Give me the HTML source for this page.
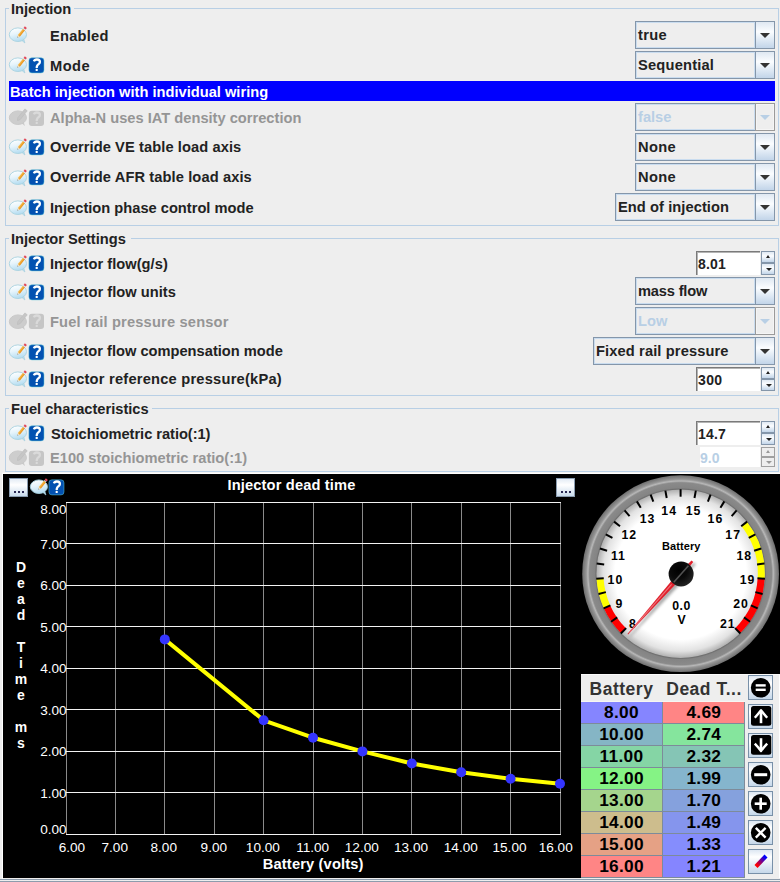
<!DOCTYPE html><html><head><meta charset="utf-8"><style>
*{margin:0;padding:0;box-sizing:border-box}
html,body{width:780px;height:882px;overflow:hidden;background:#eeeeee}
body{position:relative;font-family:"Liberation Sans",sans-serif;font-weight:bold}
.t{position:absolute;white-space:nowrap}
.a{position:absolute}
.grp{position:absolute;border:1px solid #b8cfe5}
.cb{position:absolute;border:1px solid #8496aa;background:#eeeeee}
.cb .in{position:absolute;left:0;top:0;bottom:0;border:1px solid #c9dcef}
.cb .ar{position:absolute;right:0;top:0;bottom:0;width:19px;border-left:1px solid #8496aa;background:linear-gradient(#dfe8f2,#fbfdff 38%,#c2d5e9)}
.cb .tri{position:absolute;left:3.5px;top:11px;width:0;height:0;border-left:5px solid transparent;border-right:5px solid transparent;border-top:5px solid #333}
.cb.dis .ar{top:-1px;bottom:-1px;right:-1px;width:20px;border:1px solid #9a9a9a;background:#eeeeee;box-shadow:inset 1px 1px 0 #f5f5f5,inset -1px -1px 0 #f5f5f5}
.cb.dis .ar .tri{left:3.5px;top:11px}
.cb.dis .tri{border-top-color:#b8cfe5}
.sp{position:absolute;background:#fff;border-top:1px solid #7a7a7a;border-left:1px solid #7a7a7a;box-shadow:inset 1px 1px 0 #b4b4b4}
.sb{position:absolute;border:1px solid #8496aa;background:linear-gradient(#dfe8f2,#fbfdff 40%,#c2d5e9)}
.sb.dis{border-color:#a0a0a0;background:#eeeeee}
.up{position:absolute;left:4px;width:0;height:0;border-left:2.5px solid transparent;border-right:2.5px solid transparent;border-bottom:3px solid #222}
.dn{position:absolute;left:3.5px;width:0;height:0;border-left:3px solid transparent;border-right:3px solid transparent;border-top:3.5px solid #222}
</style></head><body>

<svg width="0" height="0" style="position:absolute">
<defs>
<linearGradient id="bub" x1="0.2" y1="0" x2="0.5" y2="1"><stop offset="0" stop-color="#ffffff"/><stop offset="0.45" stop-color="#e6f4fb"/><stop offset="1" stop-color="#b3dcf1"/></linearGradient>
<linearGradient id="pen" x1="0" y1="0" x2="0" y2="1"><stop offset="0" stop-color="#f8c25a"/><stop offset="1" stop-color="#e88d12"/></linearGradient>
<symbol id="ed" viewBox="0 0 22 22">
<path d="M14.6 17.2 L17.9 20 L16.9 16.4 Z" fill="#b9dff2" stroke="#a6d0de" stroke-width="0.7"/>
<ellipse cx="10.9" cy="11.7" rx="8.6" ry="6.8" fill="url(#bub)" stroke="#a8d2e0" stroke-width="0.9"/>
<g transform="translate(10.4,14.6) rotate(-51.1)">
<path d="M0 0 L2.2 -1.3 L2.2 1.3 Z" fill="#f3e2c0"/>
<path d="M0 0 L0.9 -0.55 L0.9 0.55 Z" fill="#444"/>
<rect x="2.2" y="-1.3" width="8.2" height="2.6" fill="url(#pen)"/>
<rect x="10.4" y="-1.3" width="1" height="2.6" fill="#d3e6f0"/>
<rect x="11.4" y="-1.3" width="2.1" height="2.6" fill="#e0485a"/>
</g>
</symbol>
<symbol id="edd" viewBox="0 0 22 22">
<path d="M14.6 17.2 L17.9 20 L16.9 16.4 Z" fill="#cbcbcb"/>
<ellipse cx="10.9" cy="11.7" rx="8.6" ry="6.8" fill="#cdcdcd" stroke="#c6c6c6" stroke-width="0.9"/>
<g transform="translate(10.4,14.6) rotate(-51.1)">
<path d="M0 0 L2.4 -1.5 L13.8 -1.5 L13.8 1.5 L2.4 1.5 Z" fill="#c6c6c6" stroke="#bdbdbd" stroke-width="0.6"/>
</g>
</symbol>
<symbol id="hq" viewBox="0 0 20 20">
<rect x="1.9" y="2.8" width="15.1" height="15.1" rx="3" fill="#0351b1" stroke="#5fc9d8" stroke-width="0.5"/>
<path d="M6.9 6.4 C7.4 5 8.6 4.5 9.9 4.5 C11.7 4.5 12.9 5.6 12.9 7.1 C12.9 8.7 11.3 9.3 10.5 10.2 C10 10.8 9.7 11.5 9.7 12.9" fill="none" stroke="#fff" stroke-width="2.3"/>
<circle cx="9.7" cy="14.9" r="1.2" fill="#fff"/>
</symbol>
<symbol id="hqd" viewBox="0 0 20 20">
<rect x="1.9" y="2.8" width="15.1" height="15.1" rx="3" fill="#c6c6c6"/>
<path d="M6.9 6.4 C7.4 5 8.6 4.5 9.9 4.5 C11.7 4.5 12.9 5.6 12.9 7.1 C12.9 8.7 11.3 9.3 10.5 10.2 C10 10.8 9.7 11.5 9.7 12.9" fill="none" stroke="#dadada" stroke-width="2.3"/>
<circle cx="9.7" cy="14.9" r="1.2" fill="#dadada"/>
</symbol>
</defs></svg>
<div class="grp" style="left:5px;top:8px;width:774px;height:218px"></div><div class="a" style="left:9px;top:6px;width:65px;height:5px;background:#eee"></div><div class="t" style="left:11px;top:1.58px;font-size:14.67px;line-height:14.67px;color:#222;">Injection</div>
<svg class="a" style="left:7px;top:23.2px" width="22" height="22"><use href="#ed"/></svg>
<div class="t" style="left:50px;top:28.58px;font-size:14.67px;line-height:14.67px;color:#222;letter-spacing:0.23px;">Enabled</div>
<div class="cb" style="left:635px;top:21px;width:140px;height:28px"><div class="in" style="width:119px"></div><div class="ar"><div class="tri"></div></div></div>
<div class="t" style="left:638px;top:27.58px;font-size:14.67px;line-height:14.67px;color:#222;letter-spacing:0.3px;">true</div>
<svg class="a" style="left:7px;top:53.0px" width="22" height="22"><use href="#ed"/></svg><svg class="a" style="left:27px;top:54.7px" width="20" height="20"><use href="#hq"/></svg>
<div class="t" style="left:50px;top:58.58px;font-size:14.67px;line-height:14.67px;color:#222;letter-spacing:0.45px;">Mode</div>
<div class="cb" style="left:635px;top:51px;width:140px;height:28px"><div class="in" style="width:119px"></div><div class="ar"><div class="tri"></div></div></div>
<div class="t" style="left:638px;top:57.58px;font-size:14.67px;line-height:14.67px;color:#222;letter-spacing:0.2px;">Sequential</div>
<div class="a" style="left:9px;top:81px;width:766px;height:20px;background:#0000ff"></div>
<div class="t" style="left:10px;top:84.58px;font-size:14.67px;line-height:14.67px;color:#fff;">Batch injection with individual wiring</div>
<svg class="a" style="left:7px;top:105.8px" width="22" height="22"><use href="#edd"/></svg><svg class="a" style="left:27px;top:107.5px" width="20" height="20"><use href="#hqd"/></svg>
<div class="t" style="left:50px;top:110.58px;font-size:14.67px;line-height:14.67px;color:#959595;">Alpha-N uses IAT density correction</div>
<div class="cb dis" style="left:635px;top:103px;width:140px;height:28px"><div class="in" style="width:119px"></div><div class="ar"><div class="tri"></div></div></div>
<div class="t" style="left:638px;top:109.58px;font-size:14.67px;line-height:14.67px;color:#b8cfe5;">false</div>
<svg class="a" style="left:7px;top:135.2px" width="22" height="22"><use href="#ed"/></svg><svg class="a" style="left:27px;top:136.9px" width="20" height="20"><use href="#hq"/></svg>
<div class="t" style="left:50px;top:139.58px;font-size:14.67px;line-height:14.67px;color:#222;letter-spacing:0.085px;">Override VE table load axis</div>
<div class="cb" style="left:635px;top:133px;width:140px;height:28px"><div class="in" style="width:119px"></div><div class="ar"><div class="tri"></div></div></div>
<div class="t" style="left:638px;top:139.58px;font-size:14.67px;line-height:14.67px;color:#222;letter-spacing:0.37px;">None</div>
<svg class="a" style="left:7px;top:165.5px" width="22" height="22"><use href="#ed"/></svg><svg class="a" style="left:27px;top:167.2px" width="20" height="20"><use href="#hq"/></svg>
<div class="t" style="left:50px;top:169.58px;font-size:14.67px;line-height:14.67px;color:#222;letter-spacing:0.1px;">Override AFR table load axis</div>
<div class="cb" style="left:635px;top:163px;width:140px;height:28px"><div class="in" style="width:119px"></div><div class="ar"><div class="tri"></div></div></div>
<div class="t" style="left:638px;top:169.58px;font-size:14.67px;line-height:14.67px;color:#222;letter-spacing:0.37px;">None</div>
<svg class="a" style="left:7px;top:195.7px" width="22" height="22"><use href="#ed"/></svg><svg class="a" style="left:27px;top:197.4px" width="20" height="20"><use href="#hq"/></svg>
<div class="t" style="left:50px;top:200.58px;font-size:14.67px;line-height:14.67px;color:#222;">Injection phase control mode</div>
<div class="cb" style="left:615px;top:193px;width:160px;height:28px"><div class="in" style="width:139px"></div><div class="ar"><div class="tri"></div></div></div>
<div class="t" style="left:618px;top:199.58px;font-size:14.67px;line-height:14.67px;color:#222;letter-spacing:0.07px;">End of injection</div>
<div class="grp" style="left:5px;top:238px;width:774px;height:158px"></div><div class="a" style="left:9px;top:236px;width:122px;height:5px;background:#eee"></div><div class="t" style="left:11px;top:231.58px;font-size:14.67px;line-height:14.67px;color:#222;">Injector Settings</div>
<svg class="a" style="left:7px;top:251.5px" width="22" height="22"><use href="#ed"/></svg><svg class="a" style="left:27px;top:253.2px" width="20" height="20"><use href="#hq"/></svg>
<div class="t" style="left:50px;top:256.58px;font-size:14.67px;line-height:14.67px;color:#222;letter-spacing:0.03px;">Injector flow(g/s)</div>
<div class="sp" style="left:696px;top:251px;width:64px;height:24px"></div><div class="t" style="left:698px;top:256.65px;font-size:14px;line-height:14px;color:#222;letter-spacing:0.2px;">8.01</div>
<div class="sb" style="left:761px;top:251px;width:14px;height:12px"><div class="up" style="top:3px"></div></div><div class="sb" style="left:761px;top:263px;width:14px;height:12px"><div class="dn" style="top:4px"></div></div>
<svg class="a" style="left:7px;top:279.9px" width="22" height="22"><use href="#ed"/></svg><svg class="a" style="left:27px;top:281.6px" width="20" height="20"><use href="#hq"/></svg>
<div class="t" style="left:50px;top:284.58px;font-size:14.67px;line-height:14.67px;color:#222;letter-spacing:0.03px;">Injector flow units</div>
<div class="cb" style="left:635px;top:277px;width:140px;height:28px"><div class="in" style="width:119px"></div><div class="ar"><div class="tri"></div></div></div>
<div class="t" style="left:638px;top:283.58px;font-size:14.67px;line-height:14.67px;color:#222;letter-spacing:-0.18px;">mass flow</div>
<svg class="a" style="left:7px;top:309.7px" width="22" height="22"><use href="#edd"/></svg><svg class="a" style="left:27px;top:311.4px" width="20" height="20"><use href="#hqd"/></svg>
<div class="t" style="left:50px;top:314.58px;font-size:14.67px;line-height:14.67px;color:#959595;letter-spacing:0.17px;">Fuel rail pressure sensor</div>
<div class="cb dis" style="left:635px;top:307px;width:140px;height:28px"><div class="in" style="width:119px"></div><div class="ar"><div class="tri"></div></div></div>
<div class="t" style="left:638px;top:313.58px;font-size:14.67px;line-height:14.67px;color:#b8cfe5;">Low</div>
<svg class="a" style="left:7px;top:339.9px" width="22" height="22"><use href="#ed"/></svg><svg class="a" style="left:27px;top:341.6px" width="20" height="20"><use href="#hq"/></svg>
<div class="t" style="left:50px;top:343.58px;font-size:14.67px;line-height:14.67px;color:#222;">Injector flow compensation mode</div>
<div class="cb" style="left:593px;top:337px;width:182px;height:28px"><div class="in" style="width:161px"></div><div class="ar"><div class="tri"></div></div></div>
<div class="t" style="left:596px;top:343.58px;font-size:14.67px;line-height:14.67px;color:#222;letter-spacing:0.12px;">Fixed rail pressure</div>
<svg class="a" style="left:7px;top:367.2px" width="22" height="22"><use href="#ed"/></svg><svg class="a" style="left:27px;top:368.9px" width="20" height="20"><use href="#hq"/></svg>
<div class="t" style="left:50px;top:371.58px;font-size:14.67px;line-height:14.67px;color:#222;letter-spacing:0.22px;">Injector reference pressure(kPa)</div>
<div class="sp" style="left:696px;top:367px;width:64px;height:24px"></div><div class="t" style="left:698px;top:372.65px;font-size:14px;line-height:14px;color:#222;letter-spacing:0.4px;">300</div>
<div class="sb" style="left:761px;top:367px;width:14px;height:12px"><div class="up" style="top:3px"></div></div><div class="sb" style="left:761px;top:379px;width:14px;height:12px"><div class="dn" style="top:4px"></div></div>
<div class="grp" style="left:5px;top:408px;width:774px;height:64px"></div><div class="a" style="left:9px;top:406px;width:143px;height:5px;background:#eee"></div><div class="t" style="left:11px;top:401.58px;font-size:14.67px;line-height:14.67px;color:#222;">Fuel characteristics</div>
<svg class="a" style="left:7px;top:421.3px" width="22" height="22"><use href="#ed"/></svg><svg class="a" style="left:27px;top:423.0px" width="20" height="20"><use href="#hq"/></svg>
<div class="t" style="left:51px;top:426.58px;font-size:14.67px;line-height:14.67px;color:#222;letter-spacing:-0.04px;">Stoichiometric ratio(:1)</div>
<div class="sp" style="left:696px;top:421px;width:64px;height:24px"></div><div class="t" style="left:698px;top:426.65px;font-size:14px;line-height:14px;color:#222;letter-spacing:0.2px;">14.7</div>
<div class="sb" style="left:761px;top:421px;width:14px;height:12px"><div class="up" style="top:3px"></div></div><div class="sb" style="left:761px;top:433px;width:14px;height:12px"><div class="dn" style="top:4px"></div></div>
<svg class="a" style="left:7px;top:445.9px" width="22" height="22"><use href="#edd"/></svg><svg class="a" style="left:27px;top:447.6px" width="20" height="20"><use href="#hqd"/></svg>
<div class="t" style="left:50px;top:450.58px;font-size:14.67px;line-height:14.67px;color:#959595;">E100 stoichiometric ratio(:1)</div>
<div class="a" style="left:700px;top:447px;width:60px;height:20px;background:#fff"></div><div class="t" style="left:700px;top:450.65px;font-size:14px;line-height:14px;color:#b8cfe5;">9.0</div>
<div class="sb dis" style="left:761px;top:447px;width:14px;height:10px"><div class="up" style="top:2px;border-bottom-color:#999"></div></div><div class="sb dis" style="left:761px;top:457px;width:14px;height:10px"><div class="dn" style="top:3px;border-top-color:#999"></div></div>
<div class="a" style="left:2px;top:472px;width:778px;height:1px;background:#f3f3f3"></div><div class="a" style="left:2px;top:473px;width:778px;height:1px;background:#fff"></div><div class="a" style="left:2px;top:473px;width:1px;height:406px;background:#fff"></div>
<div class="a" style="left:3px;top:474px;width:777px;height:404px;background:#000"></div>
<div class="a" style="left:0;top:879px;width:780px;height:1px;background:#8d9cac"></div>
<div class="a" style="left:0;top:881px;width:780px;height:1px;background:#8d9cac"></div>
<svg class="a" style="left:0;top:0" width="780" height="882" viewBox="0 0 780 882" font-family="&quot;Liberation Sans&quot;, sans-serif" font-weight="normal">
<line x1="66.5" y1="502" x2="66.5" y2="835" stroke="#8a8a8a" stroke-width="1"/>
<line x1="115.5" y1="502" x2="115.5" y2="835" stroke="#8a8a8a" stroke-width="1"/>
<line x1="164.5" y1="502" x2="164.5" y2="835" stroke="#8a8a8a" stroke-width="1"/>
<line x1="214.5" y1="502" x2="214.5" y2="835" stroke="#8a8a8a" stroke-width="1"/>
<line x1="263.5" y1="502" x2="263.5" y2="835" stroke="#8a8a8a" stroke-width="1"/>
<line x1="313.5" y1="502" x2="313.5" y2="835" stroke="#8a8a8a" stroke-width="1"/>
<line x1="362.5" y1="502" x2="362.5" y2="835" stroke="#8a8a8a" stroke-width="1"/>
<line x1="411.5" y1="502" x2="411.5" y2="835" stroke="#8a8a8a" stroke-width="1"/>
<line x1="461.5" y1="502" x2="461.5" y2="835" stroke="#8a8a8a" stroke-width="1"/>
<line x1="510.5" y1="502" x2="510.5" y2="835" stroke="#8a8a8a" stroke-width="1"/>
<line x1="560.5" y1="502" x2="560.5" y2="835" stroke="#8a8a8a" stroke-width="1"/>
<line x1="66" y1="834.5" x2="561" y2="834.5" stroke="#f2f2f2" stroke-width="1"/>
<line x1="66" y1="792.5" x2="561" y2="792.5" stroke="#f2f2f2" stroke-width="1"/>
<line x1="66" y1="751.5" x2="561" y2="751.5" stroke="#f2f2f2" stroke-width="1"/>
<line x1="66" y1="709.5" x2="561" y2="709.5" stroke="#f2f2f2" stroke-width="1"/>
<line x1="66" y1="668.5" x2="561" y2="668.5" stroke="#f2f2f2" stroke-width="1"/>
<line x1="66" y1="626.5" x2="561" y2="626.5" stroke="#f2f2f2" stroke-width="1"/>
<line x1="66" y1="585.5" x2="561" y2="585.5" stroke="#f2f2f2" stroke-width="1"/>
<line x1="66" y1="543.5" x2="561" y2="543.5" stroke="#f2f2f2" stroke-width="1"/>
<line x1="66" y1="502.5" x2="561" y2="502.5" stroke="#f2f2f2" stroke-width="1"/>
<text x="66.7" y="833.8" fill="#fff" font-size="13.6" text-anchor="end">0.00</text>
<text x="66.7" y="797.7" fill="#fff" font-size="13.6" text-anchor="end">1.00</text>
<text x="66.7" y="756.2" fill="#fff" font-size="13.6" text-anchor="end">2.00</text>
<text x="66.7" y="714.7" fill="#fff" font-size="13.6" text-anchor="end">3.00</text>
<text x="66.7" y="673.2" fill="#fff" font-size="13.6" text-anchor="end">4.00</text>
<text x="66.7" y="631.7" fill="#fff" font-size="13.6" text-anchor="end">5.00</text>
<text x="66.7" y="590.2" fill="#fff" font-size="13.6" text-anchor="end">6.00</text>
<text x="66.7" y="548.7" fill="#fff" font-size="13.6" text-anchor="end">7.00</text>
<text x="66.7" y="513.8" fill="#fff" font-size="13.6" text-anchor="end">8.00</text>
<text x="71.9" y="852" fill="#fff" font-size="13.6" text-anchor="middle">6.00</text>
<text x="114.75" y="852" fill="#fff" font-size="13.6" text-anchor="middle">7.00</text>
<text x="163.75" y="852" fill="#fff" font-size="13.6" text-anchor="middle">8.00</text>
<text x="213.85" y="852" fill="#fff" font-size="13.6" text-anchor="middle">9.00</text>
<text x="262.85" y="852" fill="#fff" font-size="13.6" text-anchor="middle">10.00</text>
<text x="312.65" y="852" fill="#fff" font-size="13.6" text-anchor="middle">11.00</text>
<text x="361.8" y="852" fill="#fff" font-size="13.6" text-anchor="middle">12.00</text>
<text x="411" y="852" fill="#fff" font-size="13.6" text-anchor="middle">13.00</text>
<text x="460.8" y="852" fill="#fff" font-size="13.6" text-anchor="middle">14.00</text>
<text x="509.5" y="852" fill="#fff" font-size="13.6" text-anchor="middle">15.00</text>
<text x="555.7" y="852" fill="#fff" font-size="13.6" text-anchor="middle">16.00</text>
<text x="313.2" y="868.7" fill="#fff" font-size="14.67" font-weight="bold" text-anchor="middle" letter-spacing="0.15">Battery (volts)</text>
<text x="291.5" y="489.8" fill="#fff" font-size="14.67" font-weight="bold" text-anchor="middle" letter-spacing="0.15">Injector dead time</text>
<text x="21" y="572.3" fill="#fff" font-size="14" font-weight="bold" text-anchor="middle">D</text>
<text x="21" y="588.3" fill="#fff" font-size="14" font-weight="bold" text-anchor="middle">e</text>
<text x="21" y="604.3" fill="#fff" font-size="14" font-weight="bold" text-anchor="middle">a</text>
<text x="21" y="620.3" fill="#fff" font-size="14" font-weight="bold" text-anchor="middle">d</text>
<text x="21" y="652.3" fill="#fff" font-size="14" font-weight="bold" text-anchor="middle">T</text>
<text x="21" y="668.3" fill="#fff" font-size="14" font-weight="bold" text-anchor="middle">i</text>
<text x="21" y="684.3" fill="#fff" font-size="14" font-weight="bold" text-anchor="middle">m</text>
<text x="21" y="700.3" fill="#fff" font-size="14" font-weight="bold" text-anchor="middle">e</text>
<text x="21" y="732.3" fill="#fff" font-size="14" font-weight="bold" text-anchor="middle">m</text>
<text x="21" y="748.3" fill="#fff" font-size="14" font-weight="bold" text-anchor="middle">s</text>
<polyline points="164.8,639.4 263.6,720.3 313.0,737.7 362.4,751.4 411.8,763.5 461.2,772.2 510.6,778.8 560.0,783.8" fill="none" stroke="#ffff00" stroke-width="4" stroke-linejoin="round"/>
<circle cx="164.8" cy="639.4" r="5" fill="#3434ff"/>
<circle cx="263.6" cy="720.3" r="5" fill="#3434ff"/>
<circle cx="313.0" cy="737.7" r="5" fill="#3434ff"/>
<circle cx="362.4" cy="751.4" r="5" fill="#3434ff"/>
<circle cx="411.8" cy="763.5" r="5" fill="#3434ff"/>
<circle cx="461.2" cy="772.2" r="5" fill="#3434ff"/>
<circle cx="510.6" cy="778.8" r="5" fill="#3434ff"/>
<circle cx="560.0" cy="783.8" r="5" fill="#3434ff"/>
</svg><svg class="a" style="left:0;top:0" width="780" height="882" viewBox="0 0 780 882" font-family="&quot;Liberation Sans&quot;, sans-serif" font-weight="normal">
<defs>
<radialGradient id="face" cx="0.5" cy="0.5" r="0.5"><stop offset="0" stop-color="#ffffff"/><stop offset="0.78" stop-color="#ffffff"/><stop offset="0.92" stop-color="#e2e2e2"/><stop offset="1" stop-color="#b0b0b0"/></radialGradient>
<radialGradient id="ring" cx="0.5" cy="0.5" r="0.5"><stop offset="0.85" stop-color="#5e5e5e"/><stop offset="0.872" stop-color="#848484"/><stop offset="0.925" stop-color="#8a8a8a"/><stop offset="0.942" stop-color="#b8b8b8"/><stop offset="0.96" stop-color="#949494"/><stop offset="1" stop-color="#6e6e6e"/></radialGradient>
<radialGradient id="knob" cx="0.4" cy="0.35" r="0.7"><stop offset="0" stop-color="#000"/><stop offset="0.5" stop-color="#0a0a0a"/><stop offset="1" stop-color="#262626"/></radialGradient>
<filter id="nb" x="-50%" y="-50%" width="200%" height="200%"><feGaussianBlur stdDeviation="1.6"/></filter>
</defs>
<circle cx="680.6" cy="573.7" r="98.4" fill="url(#ring)"/>
<circle cx="680.6" cy="573.7" r="84.2" fill="url(#face)"/>
<path d="M621.06,633.24 A84.2,84.2 0 0 1 603.82,608.26 L610.20,605.38 A77.2,77.2 0 0 0 626.01,628.29 Z" fill="#ff0000"/>
<path d="M603.82,608.26 A84.2,84.2 0 0 1 596.55,578.78 L603.54,578.36 A77.2,77.2 0 0 0 610.20,605.38 Z" fill="#ffff00"/>
<path d="M746.88,521.77 A84.2,84.2 0 0 1 764.65,578.78 L757.66,578.36 A77.2,77.2 0 0 0 741.37,526.09 Z" fill="#ffff00"/>
<path d="M764.65,578.78 A84.2,84.2 0 0 1 740.14,633.24 L735.19,628.29 A77.2,77.2 0 0 0 757.66,578.36 Z" fill="#ff0000"/>
<line x1="620.85" y1="633.45" x2="626.15" y2="628.15" stroke="#000" stroke-width="2"/>
<line x1="611.06" y1="621.70" x2="617.23" y2="617.44" stroke="#000" stroke-width="2"/>
<line x1="603.54" y1="608.38" x2="610.38" y2="605.30" stroke="#000" stroke-width="2"/>
<line x1="598.56" y1="593.92" x2="605.84" y2="592.13" stroke="#000" stroke-width="2"/>
<line x1="596.25" y1="578.80" x2="603.74" y2="578.35" stroke="#000" stroke-width="2"/>
<line x1="596.72" y1="563.51" x2="604.16" y2="564.42" stroke="#000" stroke-width="2"/>
<line x1="599.93" y1="548.56" x2="607.09" y2="550.79" stroke="#000" stroke-width="2"/>
<line x1="605.78" y1="534.43" x2="612.42" y2="537.92" stroke="#000" stroke-width="2"/>
<line x1="614.08" y1="521.59" x2="619.99" y2="526.21" stroke="#000" stroke-width="2"/>
<line x1="624.57" y1="510.45" x2="629.54" y2="516.06" stroke="#000" stroke-width="2"/>
<line x1="636.88" y1="501.39" x2="640.76" y2="507.80" stroke="#000" stroke-width="2"/>
<line x1="650.64" y1="494.69" x2="653.30" y2="501.70" stroke="#000" stroke-width="2"/>
<line x1="665.37" y1="490.58" x2="666.72" y2="497.96" stroke="#000" stroke-width="2"/>
<line x1="680.60" y1="489.20" x2="680.60" y2="496.70" stroke="#000" stroke-width="2"/>
<line x1="695.83" y1="490.58" x2="694.48" y2="497.96" stroke="#000" stroke-width="2"/>
<line x1="710.56" y1="494.69" x2="707.90" y2="501.70" stroke="#000" stroke-width="2"/>
<line x1="724.32" y1="501.39" x2="720.44" y2="507.80" stroke="#000" stroke-width="2"/>
<line x1="736.63" y1="510.45" x2="731.66" y2="516.06" stroke="#000" stroke-width="2"/>
<line x1="747.12" y1="521.59" x2="741.21" y2="526.21" stroke="#000" stroke-width="2"/>
<line x1="755.42" y1="534.43" x2="748.78" y2="537.92" stroke="#000" stroke-width="2"/>
<line x1="761.27" y1="548.56" x2="754.11" y2="550.79" stroke="#000" stroke-width="2"/>
<line x1="764.48" y1="563.51" x2="757.04" y2="564.42" stroke="#000" stroke-width="2"/>
<line x1="764.95" y1="578.80" x2="757.46" y2="578.35" stroke="#000" stroke-width="2"/>
<line x1="762.64" y1="593.92" x2="755.36" y2="592.13" stroke="#000" stroke-width="2"/>
<line x1="757.66" y1="608.38" x2="750.82" y2="605.30" stroke="#000" stroke-width="2"/>
<line x1="750.14" y1="621.70" x2="743.97" y2="617.44" stroke="#000" stroke-width="2"/>
<line x1="740.35" y1="633.45" x2="735.05" y2="628.15" stroke="#000" stroke-width="2"/>
<text x="633.0" y="627.8" font-size="12.3" font-weight="bold" text-anchor="middle" letter-spacing="1" fill="#000">8</text>
<text x="619.5" y="608.2" font-size="12.3" font-weight="bold" text-anchor="middle" letter-spacing="1" fill="#000">9</text>
<text x="615.4" y="584.0" font-size="12.3" font-weight="bold" text-anchor="middle" letter-spacing="1" fill="#000">10</text>
<text x="618.4" y="560.2" font-size="12.3" font-weight="bold" text-anchor="middle" letter-spacing="1" fill="#000">11</text>
<text x="629.3" y="539.3" font-size="12.3" font-weight="bold" text-anchor="middle" letter-spacing="1" fill="#000">12</text>
<text x="647.5" y="523.4" font-size="12.3" font-weight="bold" text-anchor="middle" letter-spacing="1" fill="#000">13</text>
<text x="669.2" y="515.4" font-size="12.3" font-weight="bold" text-anchor="middle" letter-spacing="1" fill="#000">14</text>
<text x="693.5" y="515.4" font-size="12.3" font-weight="bold" text-anchor="middle" letter-spacing="1" fill="#000">15</text>
<text x="715.4" y="523.4" font-size="12.3" font-weight="bold" text-anchor="middle" letter-spacing="1" fill="#000">16</text>
<text x="733.2" y="539.4" font-size="12.3" font-weight="bold" text-anchor="middle" letter-spacing="1" fill="#000">17</text>
<text x="744.3" y="560.2" font-size="12.3" font-weight="bold" text-anchor="middle" letter-spacing="1" fill="#000">18</text>
<text x="747.5" y="584.0" font-size="12.3" font-weight="bold" text-anchor="middle" letter-spacing="1" fill="#000">19</text>
<text x="741.1" y="608.2" font-size="12.3" font-weight="bold" text-anchor="middle" letter-spacing="1" fill="#000">20</text>
<text x="727.8" y="627.8" font-size="12.3" font-weight="bold" text-anchor="middle" letter-spacing="1" fill="#000">21</text>
<text x="681.3" y="549.5" font-size="11" font-weight="bold" text-anchor="middle" letter-spacing="0.1" fill="#000">Battery</text>
<text x="681.6" y="610" font-size="12.3" font-weight="bold" text-anchor="middle" letter-spacing="0.6" fill="#000">0.0</text>
<text x="681.5" y="623.7" font-size="12.3" font-weight="bold" text-anchor="middle" fill="#000">V</text>
<polygon points="693.97,562.47 673.70,583.26 629.92,635.99 630.60,636.59 677.60,586.71 695.76,564.06" fill="#000" opacity="0.35" filter="url(#nb)"/>
<polygon points="691.47,560.47 671.20,581.26 627.42,633.99 628.10,634.59 675.10,584.71 693.26,562.06" fill="#e0202c"/>
<line x1="671.60" y1="584.29" x2="629.34" y2="632.35" stroke="#f07a80" stroke-width="1.1" opacity="0.9"/>
<circle cx="681.1" cy="574" r="12.5" fill="url(#knob)"/>
<line x1="688.39" y1="565.76" x2="673.81" y2="582.24" stroke="#5a5a5a" stroke-width="1.6" opacity="0.9"/>
</svg><div class="a" style="left:9px;top:478px;width:19px;height:19px;border:1px solid #8a9cb0;background:linear-gradient(#e4ecf5,#ffffff 35%,#c9dbec)"><div class="a" style="left:4px;top:12px;width:2px;height:2px;background:#2a2a55"></div><div class="a" style="left:8px;top:12px;width:2px;height:2px;background:#2a2a55"></div><div class="a" style="left:12px;top:12px;width:2px;height:2px;background:#2a2a55"></div></div>
<div class="a" style="left:556px;top:478px;width:19px;height:19px;border:1px solid #8a9cb0;background:linear-gradient(#e4ecf5,#ffffff 35%,#c9dbec)"><div class="a" style="left:4px;top:12px;width:2px;height:2px;background:#2a2a55"></div><div class="a" style="left:8px;top:12px;width:2px;height:2px;background:#2a2a55"></div><div class="a" style="left:12px;top:12px;width:2px;height:2px;background:#2a2a55"></div></div>
<svg class="a" style="left:28px;top:475px" width="22" height="22"><use href="#ed"/></svg><svg class="a" style="left:47px;top:477px" width="20" height="20"><use href="#hq"/></svg>
<div class="a" style="left:581px;top:674px;width:199px;height:204px;background:#eeeeee"></div>
<div class="a" style="left:779px;top:674px;width:1px;height:204px;background:#fff"></div><div class="a" style="left:581px;top:674px;width:199px;height:1px;background:#fafafa"></div>
<div class="a" style="left:581px;top:701px;width:164px;height:1px;background:#f6f6f2"></div><div class="a" style="left:581px;top:702px;width:164px;height:176px;background:#7d8b9a"></div>
<div class="a" style="left:581px;top:702px;width:81px;height:21px;background:#8585ff"></div><div class="a" style="left:663px;top:702px;width:81px;height:21px;background:#ff8585"></div>
<div class="t" style="left:421.5px;width:400px;text-align:center;top:704.36px;font-size:17.3px;line-height:17.3px;color:#000;letter-spacing:0.3px;">8.00</div>
<div class="t" style="left:503.79999999999995px;width:400px;text-align:center;top:704.36px;font-size:17.3px;line-height:17.3px;color:#000;letter-spacing:0.3px;">4.69</div>
<div class="a" style="left:581px;top:724px;width:81px;height:21px;background:#85b5c5"></div><div class="a" style="left:663px;top:724px;width:81px;height:21px;background:#85e59d"></div>
<div class="t" style="left:421.5px;width:400px;text-align:center;top:726.36px;font-size:17.3px;line-height:17.3px;color:#000;letter-spacing:0.3px;">10.00</div>
<div class="t" style="left:503.79999999999995px;width:400px;text-align:center;top:726.36px;font-size:17.3px;line-height:17.3px;color:#000;letter-spacing:0.3px;">2.74</div>
<div class="a" style="left:581px;top:746px;width:81px;height:21px;background:#85d5a5"></div><div class="a" style="left:663px;top:746px;width:81px;height:21px;background:#85c5b5"></div>
<div class="t" style="left:421.5px;width:400px;text-align:center;top:748.36px;font-size:17.3px;line-height:17.3px;color:#000;letter-spacing:0.3px;">11.00</div>
<div class="t" style="left:503.79999999999995px;width:400px;text-align:center;top:748.36px;font-size:17.3px;line-height:17.3px;color:#000;letter-spacing:0.3px;">2.32</div>
<div class="a" style="left:581px;top:768px;width:81px;height:21px;background:#85f385"></div><div class="a" style="left:663px;top:768px;width:81px;height:21px;background:#85b5cd"></div>
<div class="t" style="left:421.5px;width:400px;text-align:center;top:770.36px;font-size:17.3px;line-height:17.3px;color:#000;letter-spacing:0.3px;">12.00</div>
<div class="t" style="left:503.79999999999995px;width:400px;text-align:center;top:770.36px;font-size:17.3px;line-height:17.3px;color:#000;letter-spacing:0.3px;">1.99</div>
<div class="a" style="left:581px;top:790px;width:81px;height:21px;background:#a5d58d"></div><div class="a" style="left:663px;top:790px;width:81px;height:21px;background:#85a1dd"></div>
<div class="t" style="left:421.5px;width:400px;text-align:center;top:792.36px;font-size:17.3px;line-height:17.3px;color:#000;letter-spacing:0.3px;">13.00</div>
<div class="t" style="left:503.79999999999995px;width:400px;text-align:center;top:792.36px;font-size:17.3px;line-height:17.3px;color:#000;letter-spacing:0.3px;">1.70</div>
<div class="a" style="left:581px;top:812px;width:81px;height:21px;background:#cdbd8d"></div><div class="a" style="left:663px;top:812px;width:81px;height:21px;background:#8595ed"></div>
<div class="t" style="left:421.5px;width:400px;text-align:center;top:814.36px;font-size:17.3px;line-height:17.3px;color:#000;letter-spacing:0.3px;">14.00</div>
<div class="t" style="left:503.79999999999995px;width:400px;text-align:center;top:814.36px;font-size:17.3px;line-height:17.3px;color:#000;letter-spacing:0.3px;">1.49</div>
<div class="a" style="left:581px;top:834px;width:81px;height:21px;background:#e5a185"></div><div class="a" style="left:663px;top:834px;width:81px;height:21px;background:#858dfd"></div>
<div class="t" style="left:421.5px;width:400px;text-align:center;top:836.36px;font-size:17.3px;line-height:17.3px;color:#000;letter-spacing:0.3px;">15.00</div>
<div class="t" style="left:503.79999999999995px;width:400px;text-align:center;top:836.36px;font-size:17.3px;line-height:17.3px;color:#000;letter-spacing:0.3px;">1.33</div>
<div class="a" style="left:581px;top:856px;width:81px;height:21px;background:#ff8585"></div><div class="a" style="left:663px;top:856px;width:81px;height:21px;background:#8585ff"></div>
<div class="t" style="left:421.5px;width:400px;text-align:center;top:858.36px;font-size:17.3px;line-height:17.3px;color:#000;letter-spacing:0.3px;">16.00</div>
<div class="t" style="left:503.79999999999995px;width:400px;text-align:center;top:858.36px;font-size:17.3px;line-height:17.3px;color:#000;letter-spacing:0.3px;">1.21</div>
<div class="t" style="left:421.5px;width:400px;text-align:center;top:681.39px;font-size:17.5px;line-height:17.5px;color:#333;letter-spacing:0.5px;">Battery</div>
<div class="t" style="left:504px;width:400px;text-align:center;top:681.39px;font-size:17.5px;line-height:17.5px;color:#333;letter-spacing:0.5px;">Dead T...</div>
<div class="a" style="left:748px;top:675px;width:25px;height:25px;border:1px solid #7890a8;background:linear-gradient(#dde7f2,#ffffff 30%,#c6d8ea)"><svg class="a" style="left:0;top:0" width="23" height="23"><circle cx="11.7" cy="11.7" r="9.8" fill="#000"/><rect x="6.7" y="8.2" width="10" height="2.4" fill="#fff"/><rect x="6.7" y="12.6" width="10" height="2.4" fill="#fff"/></svg></div>
<div class="a" style="left:748px;top:704px;width:25px;height:25px;border:1px solid #7890a8;background:linear-gradient(#dde7f2,#ffffff 30%,#c6d8ea)"><svg class="a" style="left:0;top:0" width="23" height="23"><rect x="2" y="1" width="20.3" height="19.7" rx="2.5" fill="#000"/><path d="M12 18.2 L12 6" stroke="#fff" stroke-width="2.6" fill="none"/><path d="M5.8 12.8 Q9.5 8.5 12 5.2 Q14.5 8.5 18.2 12.8" stroke="#fff" stroke-width="2.4" fill="none" stroke-linejoin="round"/></svg></div>
<div class="a" style="left:748px;top:733px;width:25px;height:25px;border:1px solid #7890a8;background:linear-gradient(#dde7f2,#ffffff 30%,#c6d8ea)"><svg class="a" style="left:0;top:0" width="23" height="23"><rect x="2" y="1" width="20.3" height="19.7" rx="2.5" fill="#000"/><path d="M12 4.2 L12 16.2" stroke="#fff" stroke-width="2.6" fill="none"/><path d="M5.8 9.6 Q9.5 13.5 12 17 Q14.5 13.5 18.2 9.6" stroke="#fff" stroke-width="2.4" fill="none" stroke-linejoin="round"/></svg></div>
<div class="a" style="left:748px;top:762px;width:25px;height:25px;border:1px solid #7890a8;background:linear-gradient(#dde7f2,#ffffff 30%,#c6d8ea)"><svg class="a" style="left:0;top:0" width="23" height="23"><circle cx="11.7" cy="11.7" r="9.8" fill="#000"/><rect x="5.2" y="10.2" width="13" height="3" fill="#fff"/></svg></div>
<div class="a" style="left:748px;top:791px;width:25px;height:25px;border:1px solid #7890a8;background:linear-gradient(#dde7f2,#ffffff 30%,#c6d8ea)"><svg class="a" style="left:0;top:0" width="23" height="23"><circle cx="11.7" cy="11.7" r="9.8" fill="#000"/><rect x="5.7" y="10.4" width="12" height="2.6" fill="#fff"/><rect x="10.4" y="5.7" width="2.6" height="12" fill="#fff"/></svg></div>
<div class="a" style="left:748px;top:820px;width:25px;height:25px;border:1px solid #7890a8;background:linear-gradient(#dde7f2,#ffffff 30%,#c6d8ea)"><svg class="a" style="left:0;top:0" width="23" height="23"><circle cx="11.7" cy="11.7" r="9.8" fill="#000"/><path d="M6.8 6.8 L16.6 16.6 M16.6 6.8 L6.8 16.6" stroke="#fff" stroke-width="2.4"/></svg></div>
<div class="a" style="left:748px;top:849px;width:25px;height:25px;border:1px solid #7890a8;background:linear-gradient(#dde7f2,#ffffff 30%,#c6d8ea)"><svg class="a" style="left:0;top:0" width="23" height="23"><defs><linearGradient id="pg" x1="0" y1="1" x2="1" y2="0"><stop offset="0.1" stop-color="#f00"/><stop offset="0.9" stop-color="#00f"/></linearGradient></defs><path d="M7 16.5 L17 6" stroke="url(#pg)" stroke-width="4.2"/></svg></div>

<!--CHART-->
</body></html>
